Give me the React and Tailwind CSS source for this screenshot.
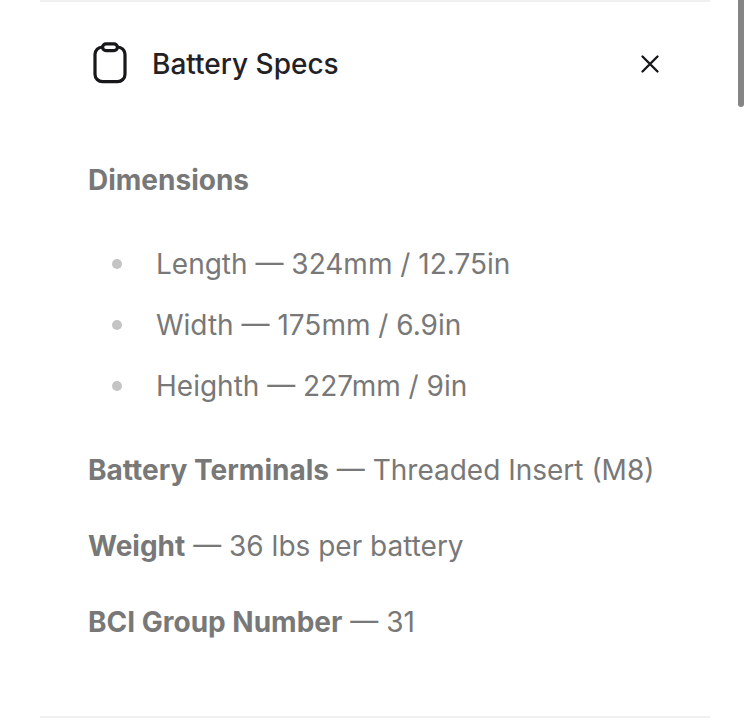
import React from 'react';

const dims = ['Length — 324mm / 12.75in', 'Width — 175mm / 6.9in', 'Heighth — 227mm / 9in'];

const specs = [
  { label: 'Battery Terminals', value: 'Threaded Insert (M8)' },
  { label: 'Weight', value: '36 lbs per battery' },
  { label: 'BCI Group Number', value: '31' },
];

function BatteryIcon() {
  return (
    <svg className="w-[36px] h-[44px] text-[#18181b]" viewBox="0 0 36 44" fill="none" stroke="currentColor" strokeWidth="3.2">
      <rect x="3" y="5" width="30" height="34.7" rx="7.5" />
      <rect x="10.6" y="1.9" width="14.8" height="6.8" rx="3.4" fill="#fff" />
    </svg>
  );
}

export default function App() {
  return (
    <div className="relative h-[726px] overflow-hidden bg-white font-['Inter',sans-serif]">
      <div className="mx-[40px] w-[670px] h-[718px] border-y-2 border-[#f0f0f0] px-[48px] flex flex-col">
        <div className="flex items-center h-[44px] mt-[40px]">
          <div className="ml-[4px]"><BatteryIcon /></div>
          <h1 className="ml-[24px] text-[28px] leading-[44px] font-medium text-[#222226]">Battery Specs</h1>
          <button className="ml-auto text-[#18181b]">
            <svg className="w-[24px] h-[24px] block" viewBox="0 0 24 24" fill="none" stroke="currentColor" strokeWidth="2.4" strokeLinecap="round">
              <path d="M4.5 4.5 19.5 19.5M19.5 4.5 4.5 19.5" />
            </svg>
          </button>
        </div>

        <h2 className="mt-[74px] text-[28px] leading-[40px] font-bold text-[#787878]">Dimensions</h2>

        <ul className="mt-[44px] flex flex-col gap-[21px]">
          {dims.map((d) => (
            <li key={d} className="flex items-center h-[40px] text-[28px] text-[#787878]">
              <span className="ml-[24px] w-[10px] h-[10px] rounded-full bg-[#c4c4c4]"></span>
              <span className="ml-[34px]">{d}</span>
            </li>
          ))}
        </ul>

        <div className="mt-[44px] flex flex-col gap-[36px]">
          {specs.map((s) => (
            <p key={s.label} className="text-[28px] leading-[40px] text-[#787878]">
              <strong className="font-bold">{s.label}</strong> — {s.value}
            </p>
          ))}
        </div>
      </div>
      <div className="absolute top-0 right-[6px] w-[6px] h-[107px] rounded-b-full bg-[#858585]"></div>
    </div>
  );
}
